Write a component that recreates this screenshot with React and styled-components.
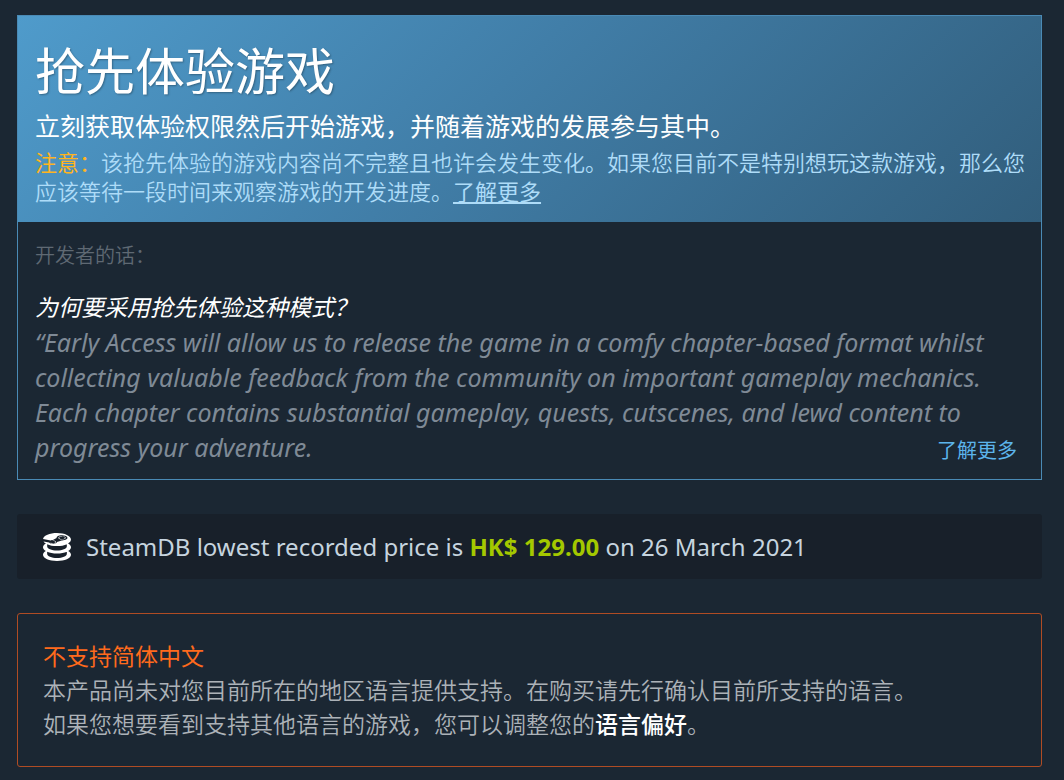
import React from "react";
import styled, { createGlobalStyle } from "styled-components";
import { SiSteamdb } from "react-icons/si";

export default function App() {
  return (
    <Page>
      <GlobalStyle />
      <EarlyAccess>
        <Header>
          <h1>抢先体验游戏</h1>
          <h2>立刻获取体验权限然后开始游戏，并随着游戏的发展参与其中。</h2>
          <p>
            <span>注意：</span>该抢先体验的游戏内容尚不完整且也许会发生变化。如果您目前不是特别想玩这款游戏，那么您应该等待一段时间来观察游戏的开发进度。<a href="#learn">了解更多</a>
          </p>
        </Header>
        <Developer>
          <h3>开发者的话：</h3>
          <h4>为何要采用抢先体验这种模式？</h4>
          <blockquote>
            “Early Access will allow us to release the game in a comfy
            chapter-based format whilst collecting valuable feedback from the
            community on important gameplay mechanics. Each chapter contains
            substantial gameplay, quests, cutscenes, and lewd content to
            progress your adventure.
            <MoreLink href="#more">了解更多</MoreLink>
          </blockquote>
        </Developer>
      </EarlyAccess>
      <Price>
        <SiSteamdb aria-hidden="true" />
        <p>
          SteamDB lowest recorded price is <b>HK$ 129.00</b> on 26 March 2021
        </p>
      </Price>
      <Notice>
        <h3>不支持简体中文</h3>
        <p>
          本产品尚未对您目前所在的地区语言提供支持。在购买请先行确认目前所支持的语言。
        </p>
        <p>
          如果您想要看到支持其他语言的游戏，您可以调整您的<a href="#language">语言偏好</a>。
        </p>
      </Notice>
    </Page>
  );
}

const GlobalStyle = createGlobalStyle`
  * {
    box-sizing: border-box;
    margin: 0;
    padding: 0;
  }
  body {
    background-color: #1b2733;
    font-family: "Noto Sans", "Noto Sans CJK SC", sans-serif;
  }
`;

const Page = styled.main`
  display: flex;
  flex-direction: column;
  gap: 34px;
  padding: 15px 22px 12px 17px;
`;

const EarlyAccess = styled.section`
  border: 1px solid #4a8ab5;
`;

const Header = styled.div`
  padding: 17px 12px 17px 17px;
  background: linear-gradient(135deg, #4f9bcb 0%, #417ea8 45%, #315d7b 100%);
  font-family: "Noto Sans CJK SC", sans-serif;
  h1 {
    font-size: 50px;
    line-height: 70px;
    font-weight: 400;
    color: #ffffff;
    text-shadow: 1px 1px 2px rgba(0, 0, 0, 0.3);
  }
  h2 {
    margin: 4px 0;
    font-size: 25px;
    line-height: 36px;
    font-weight: 400;
    color: #ffffff;
  }
  p {
    font-size: 22px;
    line-height: 29px;
    font-weight: 350;
    color: #aedcf8;
    span {
      font-weight: 400;
      color: #ffb420;
    }
    a {
      color: #aedcf8;
      font-weight: 400;
    }
  }
`;

const Developer = styled.div`
  display: flow-root;
  padding: 16px 24px 11px 17px;
  h3 {
    font-size: 20px;
    line-height: 35px;
    font-weight: 350;
    color: #5f6973;
  }
  h4 {
    margin-top: 17px;
    font-size: 23px;
    line-height: 35px;
    font-weight: 400;
    font-style: italic;
    color: #ffffff;
  }
  blockquote {
    font-size: 25px;
    line-height: 35px;
    font-style: italic;
    color: #7f8a96;
  }
`;

const MoreLink = styled.a`
  float: right;
  margin-top: 3px;
  font-size: 20px;
  line-height: 35px;
  font-style: normal;
  color: #5cb4ec;
  text-decoration: none;
`;

const Price = styled.section`
  display: flex;
  align-items: center;
  gap: 15px;
  padding: 15px 26px;
  border-radius: 3px;
  background-color: #18202a;
  color: #c6d4df;
  font-size: 24px;
  line-height: 35px;
  svg {
    width: 28px;
    height: 28px;
    color: #ffffff;
  }
  b {
    font-weight: 700;
    color: #a4c800;
  }
`;

const Notice = styled.section`
  padding: 24px 25px 26px;
  border: 1px solid #b04c24;
  border-radius: 3px;
  font-size: 23px;
  line-height: 34px;
  color: #acb2b8;
  font-family: "Noto Sans CJK SC", sans-serif;
  font-weight: 350;
  h3 {
    font-size: 23px;
    line-height: 34px;
    font-weight: 400;
    color: #ff6a1c;
  }
  a {
    color: #ffffff;
    font-weight: 500;
    text-decoration: none;
  }
`;
